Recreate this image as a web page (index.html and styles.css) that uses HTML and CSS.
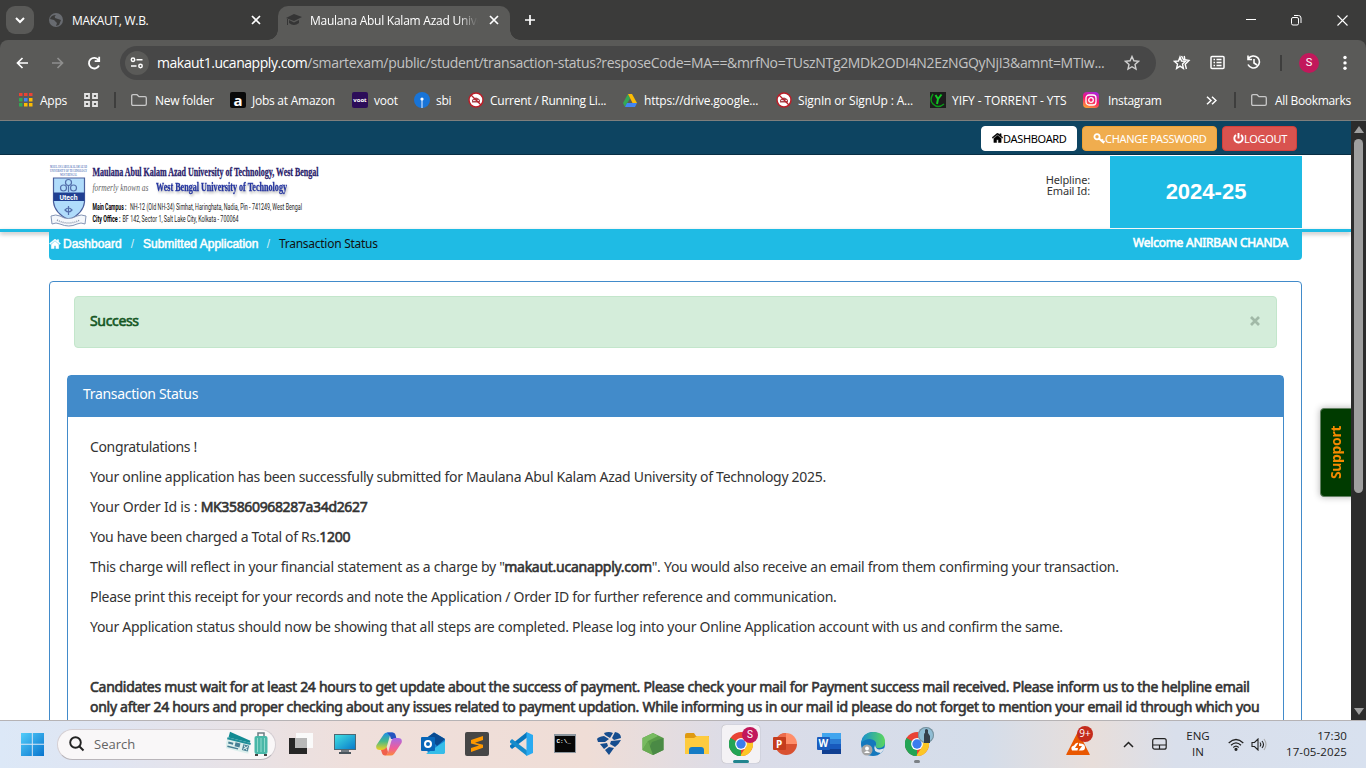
FILE: index.html
```html
<!DOCTYPE html>
<html lang="en">
<head>
<meta charset="utf-8">
<title>Maulana Abul Kalam Azad University</title>
<link rel="stylesheet" href="styles.css">
</head>
<body>
<div class="screen">
  <header class="tabs">
    <div class="tab-search"><svg width="28" height="28" fill="none" stroke="#fff" stroke-width="2"><path d="M10 12l4 4 4-4"/></svg></div>
    <div class="tab idle">
      <svg width="14" height="14"><circle cx="7" cy="7" r="7" fill="#686b70"/><path d="M7 2q-2 1-1 3l3 1 3 1-2 5-3 1 1-3-3-3-4-1q1-4 6-4" fill="#3b3b3a"/></svg>
      <span class="tab-name">MAKAUT, W.B.</span>
      <svg class="x" width="10" height="10" stroke="#fff" stroke-width="1.700"><path d="M1 1l8 8M9 1l-8 8"/></svg>
    </div>
    <div class="tab active">
      <svg width="16" height="12" fill="#353535"><path d="M0 4l8-4 8 3-8 4zM3 6l5 2.500 5-2.500v3q-5 4-10 0zM1 5h1v6H1z"/></svg>
      <span class="tab-name fade">Maulana Abul Kalam Azad Unive</span>
      <svg class="x" width="10" height="10" stroke="#fff" stroke-width="1.700"><path d="M1 1l8 8M9 1l-8 8"/></svg>
    </div>
    <svg class="plus" width="12" height="12" stroke="#fff" stroke-width="1.700"><path d="M6 1v10M1 6h10"/></svg>
    <div class="win-controls">
      <svg width="10" height="10" stroke="#fff"><path d="M0 4.500h10"/></svg>
      <svg width="11" height="11" fill="none" stroke="#fff"><rect x=".5" y="2.500" width="7" height="7.500" rx="1.500"/><path d="M3 .5h4.500q2.500 0 2.500 2.500v5"/></svg>
      <svg width="11" height="11" stroke="#fff" stroke-width="1.100"><path d="M.5.500l10 10M10.500.500l-10 10"/></svg>
    </div>
  </header>

  <div class="toolbar">
    <svg class="nav back" width="12" height="12" fill="none" stroke="#fff" stroke-width="1.700"><path d="M12 6H1.500M6.500 1l-5 5 5 5"/></svg>
    <svg class="nav fwd" width="12" height="12" fill="none" stroke="#8f8f8e" stroke-width="1.700"><path d="M0 6h10.500M5.500 1l5 5-5 5"/></svg>
    <svg class="nav reload" width="14" height="14" fill="none" stroke="#fff" stroke-width="1.800"><path d="M12 9.500a5.300 5.300 0 1 1-.5-5.500M12.200.700v4.500H7.700"/></svg>
    <div class="address">
      <span class="site"><svg width="14" height="12" fill="none" stroke="#fff" stroke-width="1.500"><circle cx="3" cy="2.700" r="1.700"/><path d="M6.500 2.700H12.500M1 9h5.500"/><circle cx="10.500" cy="9" r="1.700"/></svg></span>
      <span class="url"><b>makaut1.ucanapply.com</b>/smartexam/public/student/transaction-status?resposeCode=MA==&amp;mrfNo=TUszNTg2MDk2ODI4N2EzNGQyNjI3&amp;amnt=MTIw...</span>
      <svg class="star" width="16" height="16" fill="none" stroke="#d0d0d0" stroke-width="1.400"><path d="M8 1.500l1.900 4.300 4.600.500-3.500 3.100 1 4.700L8 11.700 4 14.100l1-4.700L1.500 6.300l4.600-.5z"/></svg>
    </div>
    <div class="tools">
      <svg width="18" height="16" fill="none" stroke="#fff" stroke-width="1.400"><path d="M7 2l1.500 4 4 .400-3 2.700.9 4.300L7 11.200l-3.400 2.200.9-4.300-3-2.700 4-.4z"/><path d="M8.500 1l2 3.500 5.500.900-3.800 3.800 1.200 4.800M11.200 1l.6 3"/></svg>
      <svg width="15" height="15" fill="none" stroke="#fff" stroke-width="1.500"><rect x="1" y="1.500" width="13" height="12" rx="1"/><path d="M3.500 4.500h1.500M6.500 4.500h5M3.500 7.500h1.500M6.500 7.500h5M3.500 10.500h1.500M6.500 10.500h5"/></svg>
      <svg width="16" height="15" fill="none" stroke="#fff" stroke-width="1.600"><path d="M2.500 3.500A6 6 0 1 1 2 9.500M2 .500v4h4M8 4v4l3 2"/></svg>
      <i class="bar"></i>
      <span class="avatar">S</span>
      <svg width="4" height="16" fill="#fff"><circle cx="2" cy="2.500" r="1.700"/><circle cx="2" cy="7.900" r="1.700"/><circle cx="2" cy="13.300" r="1.700"/></svg>
    </div>
  </div>

  <nav class="bookmarks">
    <a class="bm b-apps"><svg width="14" height="14"><path fill="#ea4335" d="M0 0h3.500v3H0zM5 0h3.500v3H5zM10 0h3.500v3H10z"/><path fill="#34a853" d="M0 5h3.500v3.500H0zM0 10h3.500v3.500H0z"/><path fill="#4285f4" d="M5 5h3.500v3.500H5z"/><path fill="#fbbc04" d="M10 5h3.500v3.500H10zM5 10h3.500v3.500H5zM10 10h3.500v3.500H10z"/></svg><span>Apps</span></a>
    <a class="bm b-grid"><svg width="14" height="14" fill="none" stroke="#e4e4e4" stroke-width="1.800"><path d="M1 1h4v4H1zM9 1h4v4H9zM1 9h4v4H1zM9 9h4v4H9z"/></svg></a>
    <i class="bar"></i>
    <a class="bm b-folder"><svg width="16" height="12" fill="none" stroke="#c8c8c8" stroke-width="1.300"><path d="M.7 10V2Q.7.700 2 .700h4l2 2h6q1.300 0 1.300 1.300v6q0 1.300-1.300 1.300H2Q.7 11.300.7 10z"/></svg><span>New folder</span></a>
    <a class="bm b-amazon"><i class="sq amazon">a</i><span>Jobs at Amazon</span></a>
    <a class="bm b-voot"><i class="sq voot">voot</i><span>voot</span></a>
    <a class="bm b-sbi"><svg width="16" height="16"><circle cx="8" cy="8" r="8" fill="#1874d8"/><path d="M7.300 8h1.400v8H7.300z" fill="#a8cfff"/><circle cx="8" cy="7" r="1.600" fill="#fff"/></svg><span>sbi</span></a>
    <a class="bm b-current"><svg width="16" height="16"><circle cx="8" cy="8" r="7" fill="#fff" stroke="#b91e28" stroke-width="1.500"/><path d="M4 10.500V8q4-5 8 0v2.500z" fill="#a5484f"/><path d="M5 8.500h6" stroke="#fff" stroke-width=".8"/><path d="M3 3l10 10" stroke="#b91e28" stroke-width="1.300"/></svg><span>Current / Running Li...</span></a>
    <a class="bm b-drive"><svg width="14" height="13"><path fill="#34a853" d="M5 0L0 9l2 4 5-8.500z"/><path fill="#fbbc04" d="M5 0h4l5 9H9.500z"/><path fill="#4285f4" d="M4 9h10l-2 4H2z"/></svg><span>https://drive.google...</span></a>
    <a class="bm b-sign"><svg width="16" height="16"><circle cx="8" cy="8" r="7" fill="#fff" stroke="#b91e28" stroke-width="1.500"/><path d="M4 10.500V8q4-5 8 0v2.500z" fill="#a5484f"/><path d="M5 8.500h6" stroke="#fff" stroke-width=".8"/><path d="M3 3l10 10" stroke="#b91e28" stroke-width="1.300"/></svg><span>SignIn or SignUp : A...</span></a>
    <a class="bm b-yify"><svg width="16" height="16"><path d="M0 0h16v16H0z" fill="#1c1c1c"/><path d="M3 2q-4 6 0 10 5 5 11 0" fill="none" stroke="#0b9a18" stroke-width="1.400"/><path d="M5.500 3l2.500 4 3.500-4.500M8 7l-1 5" fill="none" stroke="#12c724" stroke-width="2"/></svg><span>YIFY - TORRENT - YTS</span></a>
    <a class="bm b-insta"><i class="sq insta"><svg width="12" height="12" fill="none" stroke="#fff" stroke-width="1.300"><rect x="1" y="1" width="10" height="10" rx="3"/><circle cx="6" cy="6" r="2.300"/></svg></i><span>Instagram</span></a>
    <svg class="more" width="11" height="9" fill="none" stroke="#fff" stroke-width="1.500"><path d="M1 .7l4 3.800-4 3.800M6 .7l4 3.800-4 3.800"/></svg>
    <i class="bar"></i>
    <a class="bm b-all"><svg width="16" height="12" fill="none" stroke="#c8c8c8" stroke-width="1.300"><path d="M.7 10V2Q.7.700 2 .700h4l2 2h6q1.300 0 1.300 1.300v6q0 1.300-1.300 1.300H2Q.7 11.300.7 10z"/></svg><span>All Bookmarks</span></a>
  </nav>

  <div class="viewport">
    <main class="page">
      <div class="topbar">
        <a class="btn white"><svg width="11" height="10" viewBox="0 0 12 11" stroke="#000" stroke-width=".5"><path d="M6 0l2.500 2V.8H10v2.400L12 5l-.8.900L6 1.600.8 5.900 0 5zM2 6l4-3.400L10 6v4.500H7V7.300H5v3.200H2z"/></svg><span>DASHBOARD</span></a>
        <a class="btn orange"><svg width="12" height="11" fill="none" stroke="#fff" stroke-width="1.800"><circle cx="4" cy="3.700" r="2.600"/><path d="M6 5.500l5 4.500M8.500 8l1.300-1.700M10 9.500l1.500-1.700"/></svg><span>CHANGE PASSWORD</span></a>
        <a class="btn red"><svg width="11" height="11" fill="none" stroke="#fff" stroke-width="1.900"><path d="M3 1.900a4.200 4.200 0 1 0 5 0M5.500 0v5.500"/></svg><span>LOGOUT</span></a>
      </div>
      <div class="header">
        <svg class="logo" width="272" height="66">
          <g class="crest-text"><text x="1" y="4.500" textLength="37" lengthAdjust="spacingAndGlyphs">MAULANA ABUL KALAM AZAD</text><text x="1" y="9" textLength="37" lengthAdjust="spacingAndGlyphs">UNIVERSITY OF TECHNOLOGY</text><text x="11" y="13" textLength="17" lengthAdjust="spacingAndGlyphs">WEST BENGAL</text></g>
          <path d="M4.500 15h31v24q-1 11-15.500 18Q5.500 50 4.500 39z" fill="#b0dcfb" stroke="#4a5f9c" stroke-width="1.200"/>
          <path d="M4.500 29.500h31V38h-31z" fill="#203f91"/>
          <g fill="none" stroke="#536fac" stroke-width="1.200"><circle cx="19.500" cy="19.500" r="3"/><circle cx="14.500" cy="25" r="3"/><circle cx="24.500" cy="25" r="3"/><path d="M19.500 22v7M16 47q3.500 4 7 0-3.500-4-7 0zM19.500 43v9"/></g>
          <text x="10.500" y="36.700" class="utech" textLength="18" lengthAdjust="spacingAndGlyphs">Utech</text>
          <path d="M2 53q5-2 9 0 8 5 17 0 4-2 9 0l-1 8q-4-2-8 0-8 4-17 0-4-2-8 0z" fill="#f4f7fb" stroke="#8595b5"/><path d="M8 57q11 6 23 0" stroke="#8d98ad" stroke-width="1.500" stroke-dasharray="1 1" fill="none"/>
          <text x="43.500" y="12.500" class="l1" textLength="226" lengthAdjust="spacingAndGlyphs">Maulana Abul Kalam Azad University of Technology, West Bengal</text>
          <text x="43.500" y="27.500" class="l2" textLength="56" lengthAdjust="spacingAndGlyphs">formerly known as</text>
          <text x="107" y="28" class="l3" textLength="131" lengthAdjust="spacingAndGlyphs">West Bengal University of Technology</text>
          <text x="43.500" y="46.500" class="l4b" textLength="34" lengthAdjust="spacingAndGlyphs">Main Campus :</text>
          <text x="81" y="46.500" class="l4" textLength="172" lengthAdjust="spacingAndGlyphs">NH-12 (Old NH-34) Simhat, Haringhata, Nadia, Pin - 741249, West Bengal</text>
          <text x="43.500" y="59" class="l4b" textLength="28" lengthAdjust="spacingAndGlyphs">City Office :</text>
          <text x="73.500" y="59" class="l4" textLength="116" lengthAdjust="spacingAndGlyphs">BF 142, Sector 1, Salt Lake City, Kolkata - 700064</text>
        </svg>
        <div class="help">Helpline:<br>Email Id:</div>
        <div class="year">2024-25</div>
      </div>
      <div class="rule">
        <div class="crumbs">
          <svg width="12" height="10" viewBox="0 0 12 11" fill="#fff" stroke="#fff" stroke-width=".6"><path d="M6 0l2.500 2V.8H10v2.400L12 5l-.8.900L6 1.600.8 5.900 0 5zM2 6l4-3.400L10 6v4.500H7V7.300H5v3.200H2z"/></svg>
          <b class="c1">Dashboard</b><i>/</i><b class="c2">Submitted Application</b><i>/</i><span class="c3">Transaction Status</span>
          <span class="welcome">Welcome ANIRBAN CHANDA</span>
        </div>
      </div>
      <section class="outer">
        <div class="alert"><span>Success</span><svg width="10" height="10" stroke="#a1b9a7" stroke-width="2.700"><path d="M1 1l8 8M9 1l-8 8"/></svg></div>
        <div class="panel">
          <h1>Transaction Status</h1>
          <div class="body">
            <p class="p1">Congratulations !</p>
            <p class="p2">Your online application has been successfully submitted for Maulana Abul Kalam Azad University of Technology 2025.</p>
            <p class="p3">Your Order Id is : <b>MK35860968287a34d2627</b></p>
            <p class="p4">You have been charged a Total of Rs.<b>1200</b></p>
            <p class="p5">This charge will reflect in your financial statement as a charge by "<b>makaut.ucanapply.com</b>". You would also receive an email from them confirming your transaction.</p>
            <p class="p6">Please print this receipt for your records and note the Application / Order ID for further reference and communication.</p>
            <p class="p7">Your Application status should now be showing that all steps are completed. Please log into your Online Application account with us and confirm the same.</p>
            <p class="note"><b class="n1">Candidates must wait for at least 24 hours to get update about the success of payment. Please check your mail for Payment success mail received. Please inform us to the helpline email</b><br><b class="n2">only after 24 hours and proper checking about any issues related to payment updation. While informing us in our mail id please do not forget to mention your email id through which you</b></p>
          </div>
        </div>
      </section>
      <div class="support"><span>Support</span></div>
    </main>
    <div class="scroll"><i class="up"></i><i class="thumb"></i><i class="down"></i></div>
  </div>

  <footer class="taskbar">
    <svg class="start" width="23" height="23" viewBox="0 0 24 24"><defs><linearGradient id="w" x1="0" y1="0" x2="1" y2="1"><stop stop-color="#52cdfa"/><stop offset="1" stop-color="#0874ce"/></linearGradient></defs><path fill="url(#w)" d="M0 0h11.300v11.300H0zM12.300 0H24v11.300H12.300zM0 12.300h11.300V24H0zM12.300 12.300H24V24H12.300z"/></svg>
    <div class="search">
      <svg width="16" height="16" fill="none" stroke="#222" stroke-width="1.900"><circle cx="6.500" cy="6.500" r="5.300"/><path d="M10.500 10.500l4 4"/></svg>
      <span>Search</span>
      <svg class="travel" width="42" height="26"><g transform="rotate(14 12 14)"><path d="M1 3l22 4v6H1z" fill="#138b93"/><path d="M0 9h24v11H0z" fill="#dcefed"/><path d="M0 9h24v2H0z" fill="#20909a"/><path d="M2 13h5v2H2zM9 12h5v4H9zM2 17h11v1.500H2zM17 12h6v6h-6z" fill="#467f94"/><path d="M18 13l4 4M22 13l-4 4" stroke="#dcefed"/></g><path d="M32 6V2h6v4" fill="none" stroke="#697d82" stroke-width="1.500"/><rect x="28.500" y="5" width="13" height="18" rx="2" fill="#49b7a8"/><path d="M31.500 7v14M35 7v14M38.500 7v14" stroke="#8fd9cc"/><path d="M29 23h3v2h-3zM38 23h3v2h-3z" fill="#444"/></svg>
    </div>
    <div class="apps">
      <a><svg width="24" height="24"><path d="M7 1h17v15H7z" fill="#fafafa"/><path d="M0 6h18v16H0z" fill="#262626"/><path d="M6 6h12v10H6z" fill="#b8b8b8"/></svg></a>
      <a><svg width="24" height="24"><defs><linearGradient id="m" x1="0" y1="0" x2="1" y2="1"><stop stop-color="#42dfe1"/><stop offset="1" stop-color="#087bcb"/></linearGradient></defs><path d="M8 18h8v3H8z" fill="#737b82"/><path d="M6 20h12v2H6z" fill="#49545c"/><path d="M1 2h22v16H1z" fill="#4d6874"/><path d="M2 3h20v14H2z" fill="url(#m)"/></svg></a>
      <a><svg width="26" height="24"><defs><linearGradient id="c1" x1="0" y1="0" x2="0" y2="1"><stop stop-color="#1f8fe8"/><stop offset=".5" stop-color="#45b98a"/><stop offset="1" stop-color="#f1d020"/></linearGradient><linearGradient id="c2" x1="0" y1="0" x2="0" y2="1"><stop stop-color="#a66be8"/><stop offset=".6" stop-color="#f15e96"/><stop offset="1" stop-color="#fa8a3a"/></linearGradient></defs><path d="M8 2q1-1.500 3-1.500h6q-2.500 1-3.300 4L11 14q-1 4-4 4H4q-5 0-3.500-5z" fill="url(#c1)"/><path d="M11 .5h5.500q2.500 0 3.200 3L20.500 7H15l-1-3z" fill="#2454bf"/><path d="M18 22q-1.500 1.500-3 1.500H9q2.500-1 3.300-4L15 10q1-4 4-4h3q5 0 3.500 5z" fill="url(#c2)"/><path d="M5 18q4 0 5.500-3L12 20q-1 3.500-3 3.500-2.500 0-3.200-3z" fill="#f0604a"/></svg></a>
      <a><svg width="24" height="24"><path d="M4 7l9-6.500L24 7v12q0 3-3 3H7z" fill="#1682d0"/><path d="M7 5l6-4.500L24 7l-8 7z" fill="#084a91"/><path d="M5 22l19-13v11q0 2-2 2z" fill="#35bde9"/><rect y="5" width="14" height="14" rx="1" fill="#0766b8"/><circle cx="7" cy="12" r="3" fill="none" stroke="#fff" stroke-width="2"/></svg></a>
      <a><svg width="24" height="24"><rect width="24" height="24" rx="2" fill="#464646"/><path d="M6 8l12-4v4l-8 2.700 8 2v3L6 20v-4l8-2.500-8-2z" fill="#ff9800"/></svg></a>
      <a><svg width="24" height="24"><path d="M1 15l2 2L18 5.500V0L1 13.500z" fill="#0877bd"/><path d="M1 9l2-2 15 11.500V24L1 10.500z" fill="#168ccc"/><path d="M17.500 0L24 3v18l-6.500 3z" fill="#29aaf1"/></svg></a>
      <a><svg width="24" height="24"><path d="M1 2h22v19H1z" fill="#8c969e"/><path d="M2 4h20v16H2z" fill="#070707"/><text x="3.500" y="10.500" class="cmd">C:\_</text></svg></a>
      <a><svg width="24" height="24" fill="#164d8e"><path d="M0 7q1-2 7-3l5 3-4 3H1zM7 1q5-2 9 0l-3 5-5-3zM18 0q6 1 6 6l-7 2-2-2zM3 12l7-1 1 3-4 3zM14 9l10-1q-2 4-6 7l-5-3zM8 18l4-3 5 1-5 7z"/></svg></a>
      <a><svg width="24" height="24"><path d="M12 1l10.500 5v12L12 23 1.500 18V6z" fill="#5a9c48"/><path d="M12 1L1.500 6v12L7 9l10-5z" fill="#78bb60"/><path d="M22.500 6v12L12 23l-5-5 4-8z" fill="#4a8a45"/><path d="M7 9l5 14L1.500 18z" fill="#68ab52"/></svg></a>
      <a><svg width="24" height="24"><path d="M0 3q0-2 2-2h7l2 3h13v5H0z" fill="#df9a12"/><path d="M0 6h9l3-2h11q1 0 1 1v17H0z" fill="#fecb3e"/><path d="M4 22v-4q0-3 3-3h9q3 0 3 3v4z" fill="#147bc5"/></svg></a>
      <a class="current"><svg width="24" height="24"><use href="#chrome"/></svg><b class="badge">S</b><i class="run"></i></a>
      <a><svg width="24" height="24"><path d="M13 1a11 11 0 0 1 11 11H13z" fill="#ff8e6a"/><path d="M13 1a11 11 0 1 0 11 11H13z" fill="#d95131"/><path d="M13 1A11 11 0 0 0 2 12h11z" fill="#ed6b4b"/><rect y="5" width="13" height="13" rx="1" fill="#c53c1d"/><text x="3" y="15.500" class="office">P</text></svg></a>
      <a><svg width="24" height="24"><path d="M5 1h19v6H5z" fill="#41a5ee"/><path d="M5 7h19v5H5z" fill="#2b7cd3"/><path d="M5 12h19v5H5z" fill="#185abd"/><path d="M5 17h19v5H5z" fill="#103f91"/><rect y="5" width="13" height="13" rx="1" fill="#1b5cbd"/><text x="1.500" y="15" class="office">W</text></svg></a>
      <a><svg width="24" height="24"><defs><linearGradient id="e"><stop stop-color="#178fd2"/><stop offset="1" stop-color="#5bd75d"/></linearGradient></defs><circle cx="12" cy="12" r="12" fill="#1478bd"/><path d="M0 11Q2 0 12 0q12 0 12 10 0 6-7 6-3 0-2-3 1-5-6-6-5 0-9 4z" fill="url(#e)"/><path d="M24 16q-9 4-10-3-3 7 6 8z" fill="#dfe5ed"/><circle cx="6" cy="18" r="5.500" fill="#a4a4a4"/><circle cx="6" cy="16.500" r="1.900" fill="#fff"/><path d="M3 21q3-4 6 0z" fill="#fff"/></svg></a>
      <a><svg width="24" height="24"><g id="chrome"><circle cx="12" cy="12" r="12" fill="#e94335"/><path d="M1.600 6L12 12v12A12 12 0 0 1 1.600 6z" fill="#23a455"/><path d="M22.400 6A12 12 0 0 1 11 24l6-9-5-9z" fill="#fcc626"/><path d="M7.500 15l4.500 9A12 12 0 0 1 1.600 6z" fill="#23a455"/><circle cx="12" cy="12" r="5.900" fill="#fff"/><circle cx="12" cy="12" r="4.700" fill="#3b7ced"/></g></svg><b class="badge photo"><svg width="16" height="16"><path d="M6 16V8q0-2 1-2V3q1-2 3 0v3l2 3v7z" fill="#35404b"/></svg></b><i class="run small"></i></a>
    </div>
    <div class="warning"><svg width="24" height="27"><path d="M12 5L23 26.500H1z" fill="#e95700" stroke="#e95700" stroke-width="1.500" stroke-linejoin="round"/><path d="M6 22.500q-2-4 2-5 2-4 6-2 5 0 5 4 0 3-3 3z" fill="#fff"/><path d="M13 14l-4 6h3l-1 5 5-7h-3z" fill="#e95700"/></svg><b>9+</b></div>
    <svg class="chev" width="11" height="7" fill="none" stroke="#222" stroke-width="1.500"><path d="M1 6l4.500-4.500L10 6"/></svg>
    <svg class="pad" width="15" height="12" fill="none" stroke="#222" stroke-width="1.200"><rect x=".7" y=".7" width="13.500" height="10.500" rx="2"/><path d="M1 7h13M7.500 7v4"/></svg>
    <div class="lang">ENG<br>IN</div>
    <svg class="wifi" width="16" height="13" fill="none" stroke="#222" stroke-width="1.200"><path d="M.7 5Q8-2 15.300 5M3 7.300q5-4.700 10 0M5.300 9.500q2.700-2.700 5.400 0"/><circle cx="8" cy="11.300" r="1" fill="#222"/></svg>
    <svg class="vol" width="16" height="13" fill="none" stroke="#222" stroke-width="1.100"><path d="M1 4.500h2.500L7 1v11L3.500 8.500H1zM9 4.500q1.500 2 0 4M11 3q3 3.500 0 7"/><path d="M13 1q4 5.500 0 11" stroke="#aaa"/></svg>
    <div class="clock">17:30<br>17-05-2025</div>
  </footer>
</div>
</body>
</html>
```
FILE: styles.css
```css
* { box-sizing: border-box; }
body { margin: 0; background: #fff; font-family: "Noto Sans", sans-serif; }
svg { display: block; flex: none; }
span, b { white-space: nowrap; }
.screen { width: 1366px; height: 768px; display: flex; flex-direction: column; overflow: hidden; background: #3b3b3a; }

/* browser tabs */
.tabs { height: 40px; flex: none; display: flex; align-items: center; font: 12px "Open Sans", sans-serif; color: #fff; }
.tab-search { width: 28px; height: 28px; margin-left: 6px; border-radius: 9px; background: #5a5a58; }
.tab { display: flex; align-items: center; }
.tab.idle { width: 243px; padding-left: 15px; }
.tab.active { width: 232px; height: 34px; align-self: flex-end; padding: 0 0 6px 8px; margin-left: -14px; margin-right: 1px; border-radius: 10px 10px 0 0; background: #5a5a58; position: relative; }
.tab.idle + .tab.active { margin-left: 1px; }
.tab.active::before, .tab.active::after { content: ""; position: absolute; bottom: 0; width: 10px; height: 10px; }
.tab.active::before { left: -10px; background: radial-gradient(circle at 0 0, transparent 9.500px, #5a5a58 10px); }
.tab.active::after { right: -10px; background: radial-gradient(circle at 100% 0, transparent 9.500px, #5a5a58 10px); }
.tab-name { margin-left: 9px; letter-spacing: -.3px; }
.idle .tab-name { width: 179px; }
.active .tab-name { margin-left: 8px; width: 168px; overflow: hidden; letter-spacing: -.25px; }
.fade { -webkit-mask: linear-gradient(90deg, #000 88%, transparent); mask: linear-gradient(90deg, #000 88%, transparent); }
.active .x { margin-left: 11px; }
.plus { margin-left: 13px; }
.win-controls { margin-left: auto; margin-right: 18px; display: flex; gap: 35px; }

/* toolbar */
.toolbar { height: 45px; flex: none; display: flex; align-items: center; background: #5a5a58; border-radius: 8px 8px 0 0; color: #fff; }
.back { margin-left: 16px; }
.fwd { margin-left: 24px; }
.reload { margin-left: 23px; }
.address { width: 1036px; height: 34px; margin-left: 19px; border-radius: 17px; background: #474747; display: flex; align-items: center; padding-left: 5px; }
.site { width: 24px; height: 24px; border-radius: 50%; background: #5a5a58; display: grid; place-items: center; }
.url { margin-left: 8px; width: 957px; font: 14px "Open Sans", sans-serif; color: #c3c3c3; letter-spacing: -.32px; }
.url b { font-weight: 400; color: #fff; letter-spacing: -.46px; }
.star { margin-left: 10px; }
.tools { display: flex; align-items: center; margin-left: 17px; }
.tools svg:nth-child(2) { margin-left: 19px; }
.tools svg:nth-child(3) { margin-left: 21px; }
.bar { width: 2px; height: 16px; background: #3e3e3d; flex: none; }
.tools .bar { margin-left: 18px; }
.avatar { width: 20px; height: 20px; border-radius: 50%; background: #c2185b; margin-left: 17px; font: 11px/20px Roboto, sans-serif; text-align: center; }
.tools svg:last-child { margin-left: 24px; }

/* bookmarks */
.bookmarks { height: 37px; margin-top: -1px; flex: none; background: #5a5a58; border-bottom: 1px solid #7f7f7d; display: flex; align-items: center; padding: 0 0 4px 19px; color: #fff; font: 12px "Open Sans", sans-serif; }
.bm { display: flex; align-items: center; flex: none; letter-spacing: -.25px; }
.bm span { margin-left: 6px; }
.b-apps { width: 65px; } .b-apps span { margin-left: 7px; }
.b-grid { width: 30px; }
.b-folder { width: 99px; margin-left: 15px; } .b-folder span { margin-left: 8px; }
.b-amazon { width: 122px; } .b-voot { width: 62px; } .b-sbi { width: 54px; }
.b-current { width: 155px; } .b-drive { width: 153px; letter-spacing: -.2px; } .b-drive span { margin-left: 7px; }
.b-sign { width: 154px; letter-spacing: -.15px; } .b-yify { width: 153px; letter-spacing: -.08px; } .b-insta { width: 123px; letter-spacing: -.33px; } .b-insta span { margin-left: 9px; }
.more { margin-right: 17px; }
.b-all { margin-left: 15px; letter-spacing: -.32px; } .b-all span { margin-left: 8px; }
.sq { width: 16px; height: 16px; border-radius: 2px; display: grid; place-items: center; font-style: normal; font-weight: 700; letter-spacing: 0; }
.amazon { background: #090909; font-size: 15px; line-height: 13px; }
.voot { background: #2c0d59; font-size: 6px; }
.insta { background: linear-gradient(20deg, #ffb52b, #f9146b 50%, #9b2bf3); border-radius: 4px; }

/* web page */
.viewport { height: 599px; flex: none; display: flex; background: #fff; }
.page { width: 1351px; height: 599px; overflow: hidden; position: relative; color: #333; }
.topbar { height: 34px; background: #0d4461; border-bottom: 1px solid #082f45; padding: 5px 54px 0 0; display: flex; gap: 5px; justify-content: flex-end; }
.btn { height: 25px; border: 1px solid; border-radius: 4px; display: flex; align-items: center; padding: 0 0 1px 10px; font-size: 11px; }
.btn span { letter-spacing: -.32px; }
.white { width: 96px; background: #fff; border-color: #fff; color: #000; }
.orange { width: 135px; background: #f0ad4e; border-color: #eea236; color: #fff; }
.red { width: 75px; background: #d9534f; border-color: #d43f3a; color: #fff; }
.header { height: 74px; margin: 0 49px; display: flex; }
.logo { margin-top: 8px; }
.crest-text { font: bold 4.200px "Liberation Serif", serif; fill: #5f80bd; }
.utech { font: bold 8px Roboto, sans-serif; fill: #fff; }
.l1 { font: bold 12px "Liberation Serif", serif; fill: #29206a; stroke: #29206a; stroke-width: .3px; }
.l2 { font: italic 11px "Liberation Serif", serif; fill: #666; }
.l3 { font: bold 12px "Liberation Serif", serif; fill: #2636a0; stroke: #2636a0; stroke-width: .3px; filter: drop-shadow(1px 2px 1px #bbb); }
.l4, .l4b { font: 8.500px Roboto, sans-serif; fill: #222; }
.l4b { font-weight: 700; fill: #000; }
.help { width: 90px; margin-left: auto; margin-right: 20px; padding-top: 19px; font-size: 11px; line-height: 11px; text-align: right; letter-spacing: -.15px; }
.year { width: 192px; height: 72px; margin-top: 1px; background: #1fbbe4; color: #fff; font: bold 22px/71px "Liberation Sans", sans-serif; text-align: center; }
.rule { height: 3px; background: #1fbbe4; box-shadow: 0 2px 4px rgba(0,0,0,.3); padding: 0 49px; }
.crumbs { height: 31px; background: #1fbbe4; border-radius: 0 0 4px 4px; display: flex; align-items: center; padding-bottom: 2px; font: 12px "Liberation Sans", sans-serif; color: #fff; position: relative; }
.crumbs b { font-weight: 400; -webkit-text-stroke: .5px #fff; }
.c1 { margin-left: 2px; width: 59px; } .c2 { width: 115px; }
.crumbs i { width: 21px; text-align: center; font-style: normal; color: #d2eef7; }
.c3 { font-family: "Noto Sans", sans-serif; color: #111; letter-spacing: -.27px; }
.welcome { margin: -3px 14px 0 auto; font-family: "Noto Sans", sans-serif; -webkit-text-stroke: .6px #fff; letter-spacing: -.25px; }
.outer { margin: 49px 49px 0; height: 600px; border: 1px solid #428bca; border-radius: 4px; padding: 14px 17px 0; }
.alert { height: 52px; margin: 0 7px; border: 1px solid #c3e6cb; border-radius: 4px; background: #d4edda; display: flex; align-items: center; justify-content: space-between; padding: 0 16px 3px 15px; color: #155724; font-size: 14px; -webkit-text-stroke: .6px #155724; }
.alert span { letter-spacing: -.35px; margin-top: -1px; }
.panel { height: 520px; margin-top: 27px; border: 1px solid #428bca; border-radius: 4px; }
.panel h1 { height: 41px; margin: 0; padding: 8px 15px 0; background: #428bca; color: #fff; font: 14px/20px "Noto Sans", sans-serif; letter-spacing: -.32px; }
.body { padding: 20px 22px; font-size: 14px; line-height: 20px; }
.body p { margin: 0 0 10px; white-space: nowrap; }
.body .p1 { letter-spacing: -.36px; }
.body .p2 { letter-spacing: -.288px; }
.body .p3 { letter-spacing: -.2px; }
.p3 b { letter-spacing: -.35px; }
.body .p4 { letter-spacing: -.31px; }
.body .p5 { letter-spacing: -.267px; }
.body .p6 { letter-spacing: -.255px; }
.body .p7 { letter-spacing: -.285px; }
.n1 { letter-spacing: -.28px; }
.n2 { letter-spacing: -.285px; }
.body b { font-weight: 400; -webkit-text-stroke: .6px #333; }
.body .note { margin-top: 40px; }
.support { position: absolute; left: 1320px; top: 287px; width: 36px; height: 89px; border: 1px solid #638063; border-radius: 4px; background: #003b00; box-shadow: 0 0 7px rgba(0,0,0,.3); color: #f58a00; font-size: 14px; font-weight: 700; }
.support span { display: block; writing-mode: vertical-rl; transform: rotate(180deg); width: 29px; height: 87px; line-height: 29px; text-align: center; letter-spacing: -.35px; }
.scroll { width: 15px; background: #2c2c2c; display: flex; flex-direction: column; align-items: center; }
.up, .down { border: 5px solid transparent; }
.up { border-top: 0; border-bottom: 7px solid #9f9f9f; margin-top: 5px; }
.thumb { width: 9px; height: 354px; margin-top: 6px; border-radius: 5px; background: #9f9f9f; }
.down { border-bottom: 0; border-top: 7px solid #9f9f9f; margin-top: auto; margin-bottom: 5px; }

/* taskbar */
.taskbar { height: 48px; flex: none; border-top: 1px solid #b6b3b5; padding-bottom: 1px; display: flex; align-items: center; background: linear-gradient(90deg, #dce8f7 0, #e0e5f2 8%, #efdfdb 26%, #efddd6 43%, #dbdce8 54%, #d4ddea 72%, #e8deda 80%, #d9dfeb 86%, #d8e1ef); font-family: "Open Sans", sans-serif; color: #222; font-size: 11px; }
.start { margin-left: 21px; }
.search { width: 219px; height: 31px; margin-left: 13px; border-radius: 16px; border: 1px solid #d5cfd3; border-bottom-color: #b9b5ba; background: #f9f7f8; display: flex; align-items: center; padding-left: 11px; }
.search span { margin-left: 9px; color: #646464; font-size: 13px; }
.travel { margin-left: auto; margin-right: 7px; }
.apps { display: flex; margin-left: 3px; }
.apps a { width: 44px; height: 38px; display: grid; place-items: center; position: relative; }
.current::before { content: ""; position: absolute; inset: 0 3px; border-radius: 4px; background: #f4f2f5; box-shadow: 0 0 1px #888; }
.current svg { position: relative; }
.badge { position: absolute; left: 23px; top: 2px; width: 16px; height: 16px; border-radius: 50%; background: #c2185b; color: #fff; font: 10px/16px Roboto, sans-serif; text-align: center; }
.photo { background: #90bdd4; box-shadow: inset 0 0 0 1px #78909c; }
.run { position: absolute; left: 14px; bottom: 0; width: 16px; height: 3px; border-radius: 2px; background: #21858f; }
.run.small { left: 19px; width: 6px; background: #7b8085; }
.cmd { font: bold 6px "Liberation Mono", monospace; fill: #fff; }
.office { font: bold 10px "Open Sans", sans-serif; fill: #fff; }
.warning { margin-left: 127px; margin-top: -6px; position: relative; }
.warning b { position: absolute; left: 11px; top: -2px; width: 16px; height: 16px; border-radius: 50%; background: #c42b1c; color: #fff; font-size: 10px; line-height: 15px; font-weight: 400; text-align: center; }
.chev { margin-left: 33px; }
.pad { margin-left: 18px; }
.lang { width: 32px; margin-left: 15px; text-align: center; line-height: 16px; font-size: 11.500px; }
.wifi { margin-left: 14px; }
.vol { margin-left: 7px; }
.clock { margin-left: auto; margin-right: 19px; text-align: right; line-height: 16px; font-size: 11.500px; letter-spacing: .1px; }
```
